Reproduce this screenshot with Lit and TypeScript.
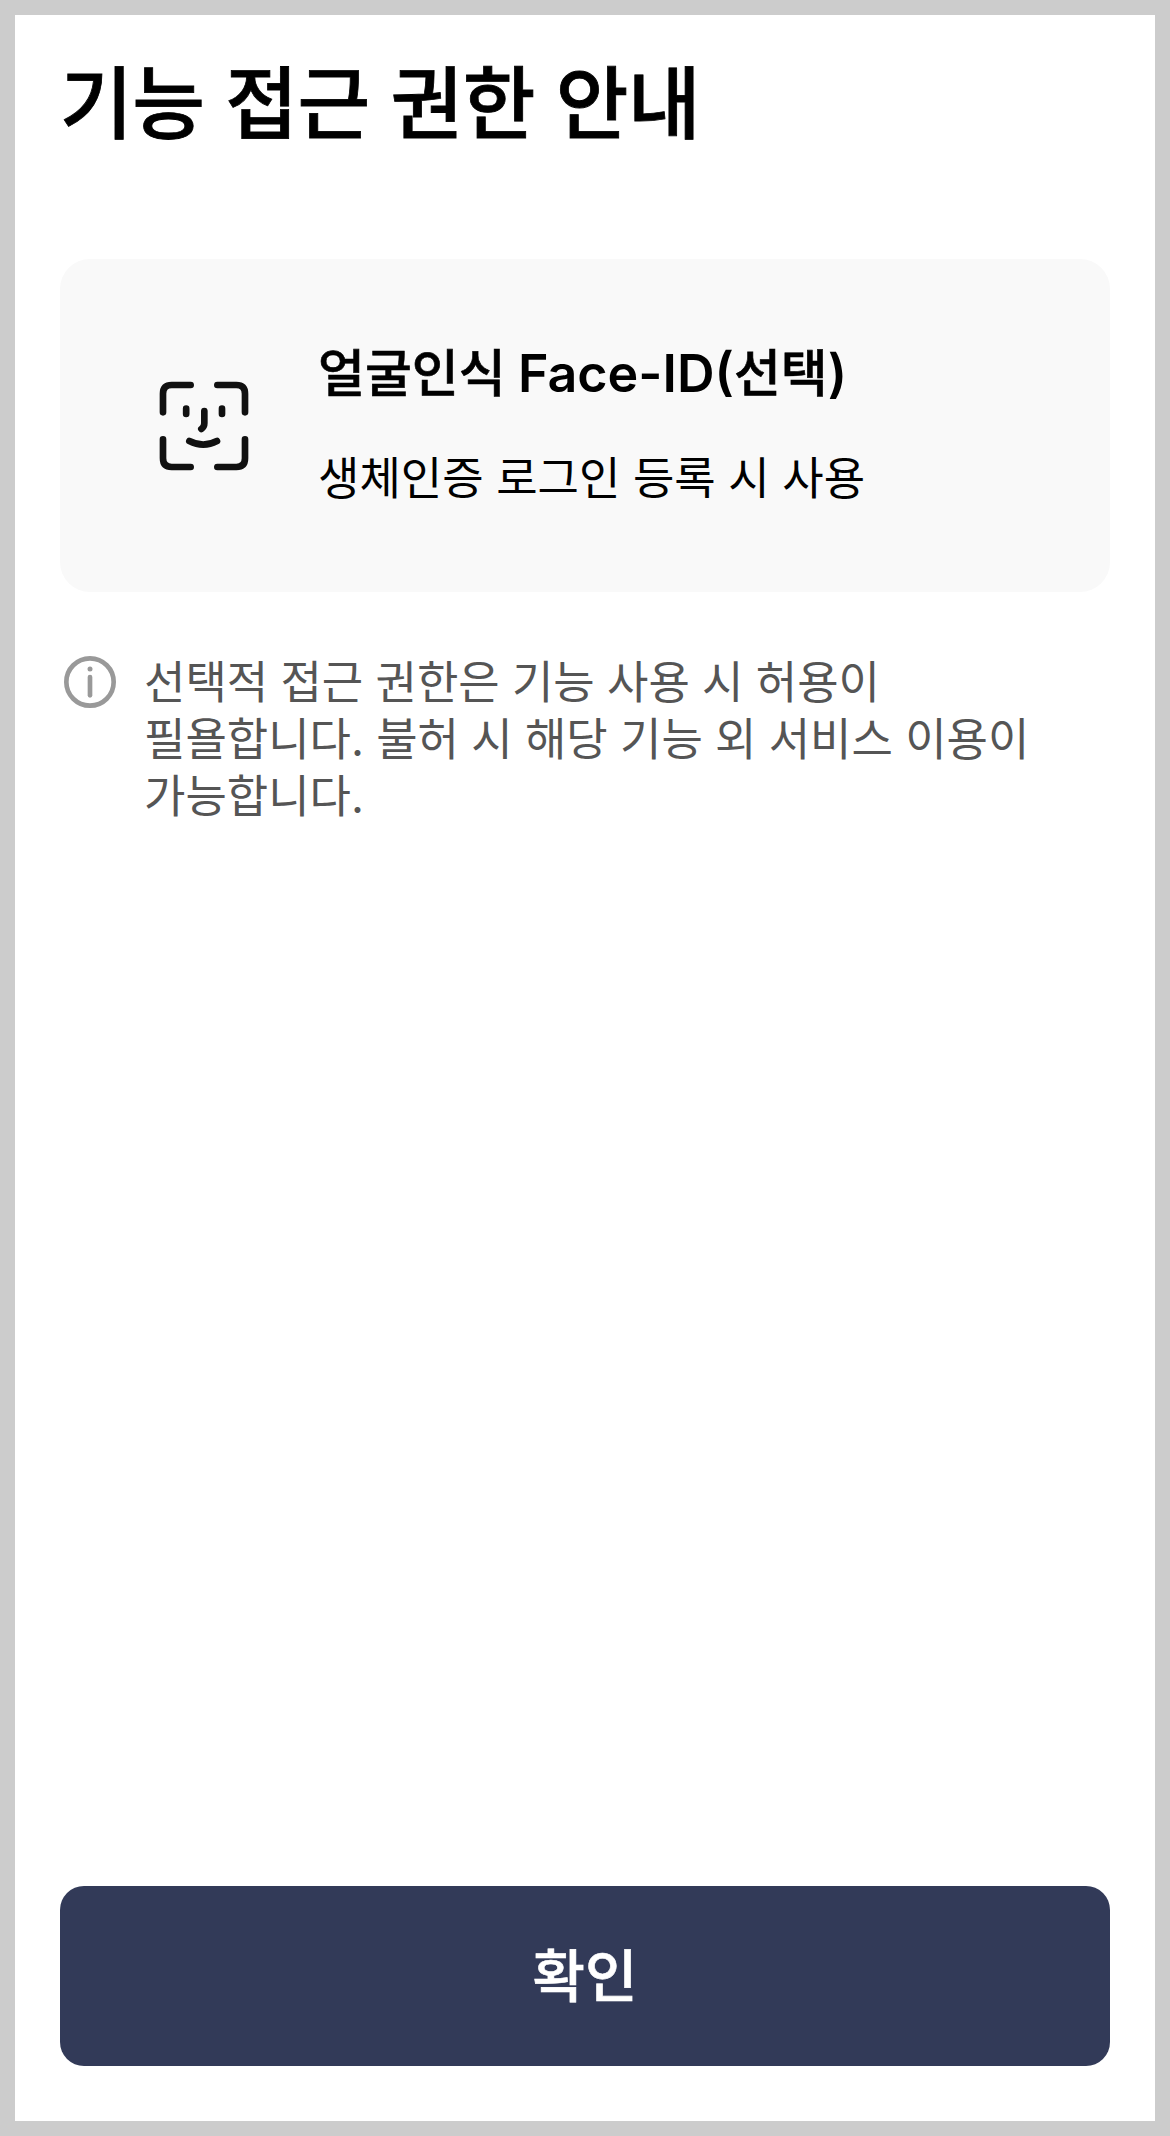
import { LitElement, html, css } from "lit";
import { customElement } from "lit/decorators.js";

@customElement("app-root")
export class AppRoot extends LitElement {
  static styles = css`
    :host { display: block; font-family: Inter, "Noto Sans CJK KR", sans-serif; color: #000; }
    .screen { box-sizing: border-box; height: 2136px; border: 15px solid #ccc; background: #fff; padding: 40px 45px 55px; display: flex; flex-direction: column; }
    .title { margin: 0; height: 204px; font-size: 79px; line-height: 99px; font-weight: 500; letter-spacing: -0.4px; white-space: nowrap; -webkit-text-stroke: 0.8px currentColor; }
    .card { box-sizing: border-box; height: 333px; flex: none; border-radius: 30px; background: #f9f9f9; display: flex; align-items: center; gap: 69px; padding-left: 99px; }
    .face { width: 90px; height: 90px; flex: none; }
    .text { padding-bottom: 2px; }
    .name { margin: 0; font-size: 51px; line-height: 64px; font-weight: 500; word-spacing: -1.4px; white-space: nowrap; -webkit-text-stroke: 0.6px currentColor; }
    .latin { font-size: 52px; font-weight: 600; -webkit-text-stroke: 0; }
    .desc { margin: 45px 0 0; font-size: 45px; line-height: 56px; word-spacing: -0.1px; white-space: nowrap; }
    .notice { display: flex; gap: 28px; margin-top: 62px; color: #555; }
    .info { width: 52px; height: 52px; flex: none; margin: 2px 0 0 4px; }
    .note { margin: 0; font-size: 45px; line-height: 57px; word-spacing: -0.4px; white-space: nowrap; }
    .ok { margin-top: auto; height: 180px; border: 0; border-radius: 24px; padding: 0 0 8px; background: #323a58; color: #fff; font: inherit; font-size: 57px; font-weight: 500; -webkit-text-stroke: 0.6px currentColor; }
  `;
  render() {
    return html`<main class="screen">
      <h1 class="title">기능 접근 권한 안내</h1>
      <section class="card">
        <svg class="face" viewBox="0 0 270 270" fill="none" stroke="#111" stroke-width="20" stroke-linecap="round">
          <path d="M12 94V38Q12 12 38 12H95M175 12H232Q258 12 258 38V94M258 175V232Q258 258 232 258H175M95 258H38Q12 258 12 232V175" />
          <path d="M81.500 83V99M189 83V99M136 90V127Q136 138 127 144M91 180Q133 202 174 180" />
        </svg>
        <div class="text"><h2 class="name">얼굴인식 <span class="latin">Face-ID(</span>선택<span class="latin">)</span></h2><p class="desc">생체인증 로그인 등록 시 사용</p></div>
      </section>
      <section class="notice">
        <svg class="info" viewBox="0 0 156 156" fill="none" stroke="#999" stroke-width="14" stroke-linecap="round">
          <circle cx="78" cy="78" r="71" />
          <path d="M78 63V118" />
          <circle cx="78" cy="39" r="7.500" fill="#999" stroke="none" />
        </svg>
        <p class="note">선택적 접근 권한은 기능 사용 시 허용이<br />필욜합니다. 불허 시 해당 기능 외 서비스 이용이<br />가능합니다.</p>
      </section>
      <button class="ok">확인</button>
    </main>`;
  }
}
